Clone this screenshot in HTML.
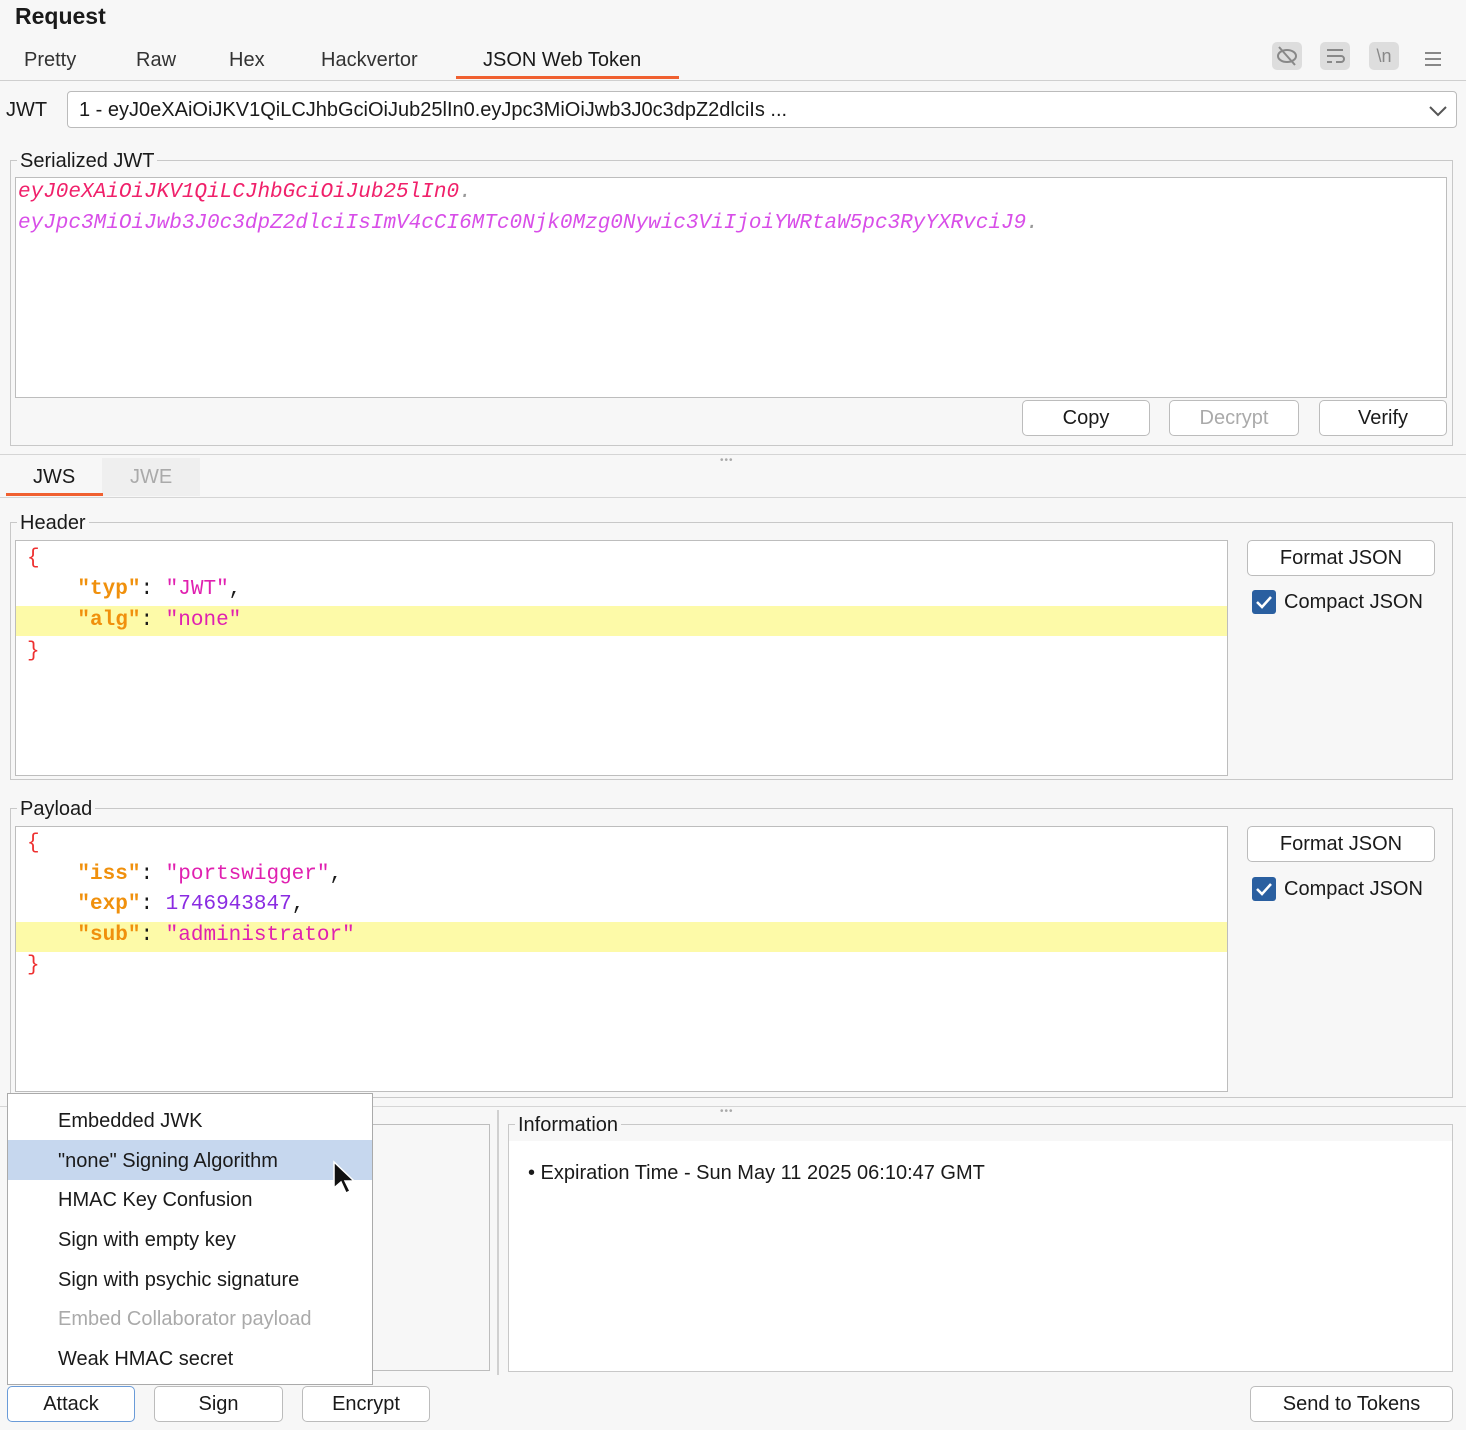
<!DOCTYPE html>
<html><head><meta charset="utf-8"><style>
*{box-sizing:border-box;margin:0;padding:0}
body{width:1466px;height:1430px;background:#f7f7f7;font-family:"Liberation Sans",sans-serif;font-size:20px;line-height:27px;color:#1a1a1a;position:relative;overflow:hidden}
.a{position:absolute;white-space:nowrap}
.box{position:absolute;border:1px solid #bdbdbd}
.w{background:#fff}
.btn{position:absolute;border:1.5px solid #bcbcbc;border-radius:5px;background:#fff;text-align:center;font-size:20px;line-height:34px}
.mono{font-family:"Liberation Mono",monospace;font-size:21px}
.fs{position:absolute;border:1px solid #c8c8c8}
.leg{position:absolute;background:#f7f7f7;padding:0 3px;top:-13px;left:6px;line-height:26px}
.k{color:#f0900c;font-weight:bold}
.s{color:#e020b0}
.br{color:#ee3030}
.n{color:#8a2be2}
.chk{position:absolute;width:24px;height:24px;background:#2a5fa0;border-radius:3px}
</style></head><body>
<div class="a" style="left:15px;top:3px;font-size:23px;font-weight:bold;">Request</div>
<div class="a" style="left:24px;top:47px;color:#333">Pretty</div>
<div class="a" style="left:136px;top:47px;color:#333">Raw</div>
<div class="a" style="left:229px;top:47px;color:#333">Hex</div>
<div class="a" style="left:321px;top:47px;color:#333">Hackvertor</div>
<div class="a" style="left:483px;top:47px;">JSON Web Token</div>
<div class="a" style="left:456px;top:76px;width:223px;height:3px;background:#f06030"></div>
<div class="a" style="left:0;top:80px;width:1466px;height:1px;background:#cfcfcf"></div>
<div class="a" style="left:1272px;top:42px;width:30px;height:28px;background:#ddd;border-radius:5px"><svg width="30" height="28"><ellipse cx="15" cy="14" rx="9" ry="6" fill="none" stroke="#888" stroke-width="2"/><line x1="7" y1="5" x2="23" y2="23" stroke="#888" stroke-width="2"/></svg></div>
<div class="a" style="left:1320px;top:42px;width:30px;height:28px;background:#ddd;border-radius:5px"><svg width="30" height="28"><path d="M7 8h16M7 14h14a3 3 0 010 6h-5M7 20h5" fill="none" stroke="#888" stroke-width="2"/></svg></div>
<div class="a" style="left:1369px;top:42px;width:30px;height:28px;background:#ddd;border-radius:5px;color:#888;font-size:18px;text-align:center;line-height:28px">\n</div>
<div class="a" style="left:1424px;top:48px"><svg width="18" height="16"><path d="M1 2h16M1 8h16M1 14h16" stroke="#888" stroke-width="2"/></svg></div>
<div class="a" style="left:6px;top:97px">JWT</div>
<div class="box w" style="left:67px;top:91px;width:1390px;height:37px;border-radius:4px;border-color:#bbb"></div>
<div class="a" style="left:79px;top:97px">1 - eyJ0eXAiOiJKV1QiLCJhbGciOiJub25lIn0.eyJpc3MiOiJwb3J0c3dpZ2dlciIs ...</div>
<div class="a" style="left:1428px;top:100px"><svg width="20" height="16"><path d="M2 4l8 8 8-8" fill="none" stroke="#555" stroke-width="2"/></svg></div>
<div class="fs" style="left:10px;top:160px;width:1443px;height:286px"><div class="leg">Serialized JWT</div></div>
<div class="box w" style="left:15px;top:177px;width:1432px;height:221px"></div>
<div class="a mono" style="left:18px;top:179px;font-style:italic;color:#f0206a">eyJ0eXAiOiJKV1QiLCJhbGciOiJub25lIn0<span style="color:#999">.</span></div>
<div class="a mono" style="left:18px;top:210px;font-style:italic;color:#d84ee8">eyJpc3MiOiJwb3J0c3dpZ2dlciIsImV4cCI6MTc0Njk0Mzg0Nywic3ViIjoiYWRtaW5pc3RyYXRvciJ9<span style="color:#999">.</span></div>
<div class="btn" style="left:1022px;top:400px;width:128px;height:36px">Copy</div>
<div class="btn" style="left:1169px;top:400px;width:130px;height:36px;color:#aaa">Decrypt</div>
<div class="btn" style="left:1319px;top:400px;width:128px;height:36px">Verify</div>
<div class="a" style="left:0;top:454px;width:1466px;height:1px;background:#d5d5d5"></div>
<div class="a" style="left:720px;top:447px;color:#aaa;font-size:10px;letter-spacing:1px">•••</div>
<div class="a" style="left:102px;top:458px;width:98px;height:38px;background:#efefef"></div>
<div class="a" style="left:33px;top:464px">JWS</div>
<div class="a" style="left:130px;top:464px;color:#aaa">JWE</div>
<div class="a" style="left:6px;top:493px;width:97px;height:3px;background:#f06030"></div>
<div class="a" style="left:0;top:497px;width:1466px;height:1px;background:#d5d5d5"></div>
<div class="fs" style="left:10px;top:522px;width:1443px;height:258px"><div class="leg">Header</div></div>
<div class="box w" style="left:15px;top:540px;width:1213px;height:236px"></div>
<div class="a" style="left:16px;top:606px;width:1211px;height:30px;background:#fdfaa8"></div>
<div class="a mono" style="left:27px;top:543px;line-height:31px"><span class="br">{</span><br>&nbsp;&nbsp;&nbsp;&nbsp;<span class="k">"typ"</span>: <span class="s">"JWT"</span>,<br>&nbsp;&nbsp;&nbsp;&nbsp;<span class="k">"alg"</span>: <span class="s">"none"</span><br><span class="br">}</span></div>
<div class="btn" style="left:1247px;top:540px;width:188px;height:36px">Format JSON</div>
<div class="chk" style="left:1252px;top:590px"><svg width="24" height="24"><path d="M5 12l5 5 9-10" fill="none" stroke="#fff" stroke-width="2.5"/></svg></div>
<div class="a" style="left:1284px;top:589px">Compact JSON</div>
<div class="fs" style="left:10px;top:808px;width:1443px;height:290px"><div class="leg">Payload</div></div>
<div class="box w" style="left:15px;top:826px;width:1213px;height:266px"></div>
<div class="a" style="left:16px;top:922px;width:1211px;height:30px;background:#fdfaa8"></div>
<div class="a mono" style="left:27px;top:829px;line-height:30.5px"><span class="br">{</span><br>&nbsp;&nbsp;&nbsp;&nbsp;<span class="k">"iss"</span>: <span class="s">"portswigger"</span>,<br>&nbsp;&nbsp;&nbsp;&nbsp;<span class="k">"exp"</span>: <span class="n">1746943847</span>,<br>&nbsp;&nbsp;&nbsp;&nbsp;<span class="k">"sub"</span>: <span class="s">"administrator"</span><br><span class="br">}</span></div>
<div class="btn" style="left:1247px;top:826px;width:188px;height:36px">Format JSON</div>
<div class="chk" style="left:1252px;top:877px"><svg width="24" height="24"><path d="M5 12l5 5 9-10" fill="none" stroke="#fff" stroke-width="2.5"/></svg></div>
<div class="a" style="left:1284px;top:876px">Compact JSON</div>
<div class="a" style="left:0;top:1106px;width:1466px;height:1px;background:#d5d5d5"></div>
<div class="a" style="left:720px;top:1098px;color:#aaa;font-size:10px;letter-spacing:1px">•••</div>
<div class="box" style="left:370px;top:1124px;width:120px;height:247px;border-left:none"></div>
<div class="a" style="left:497px;top:1110px;width:2px;height:265px;background:#d0d0d0"></div>
<div class="fs" style="left:508px;top:1124px;width:945px;height:248px"><div class="leg">Information</div></div>
<div class="box w" style="left:509px;top:1141px;width:943px;height:230px;border:none"></div>
<div class="a" style="left:528px;top:1160px">• Expiration Time - Sun May 11 2025 06:10:47 GMT</div>
<div class="a" style="left:7px;top:1093px;width:366px;height:292px;background:#fff;border:1px solid #aaa"></div>
<div class="a" style="left:8px;top:1140px;width:364px;height:40px;background:#c6d7ee"></div>
<div class="a" style="left:58px;top:1108px">Embedded JWK</div>
<div class="a" style="left:58px;top:1148px">"none" Signing Algorithm</div>
<div class="a" style="left:58px;top:1187px">HMAC Key Confusion</div>
<div class="a" style="left:58px;top:1227px">Sign with empty key</div>
<div class="a" style="left:58px;top:1267px">Sign with psychic signature</div>
<div class="a" style="left:58px;top:1306px;color:#aaa">Embed Collaborator payload</div>
<div class="a" style="left:58px;top:1346px">Weak HMAC secret</div>
<div class="a" style="left:332px;top:1160px"><svg width="24" height="36"><path d="M2 2v26l7-6 5 11 4-2-5-10h9z" fill="#111" stroke="#fff" stroke-width="1.5"/></svg></div>
<div class="btn" style="left:7px;top:1386px;width:128px;height:36px;border-color:#6a9bd8">Attack</div>
<div class="btn" style="left:154px;top:1386px;width:129px;height:36px">Sign</div>
<div class="btn" style="left:302px;top:1386px;width:128px;height:36px">Encrypt</div>
<div class="btn" style="left:1250px;top:1386px;width:203px;height:36px">Send to Tokens</div>
</body></html>
